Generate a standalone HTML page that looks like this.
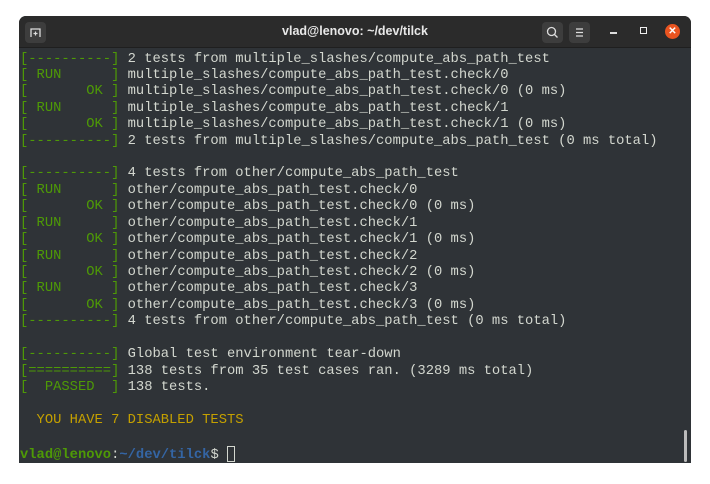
<!DOCTYPE html>
<html><head><style>
html,body{margin:0;width:710px;height:484px;background:#fff;overflow:hidden}
.win{position:absolute;left:19px;top:16px;width:672px;height:447px;background:#2f3337;border-radius:7px 7px 0 0;overflow:hidden}
.tb{position:absolute;left:0;top:0;width:672px;height:31px;background:#2b2b2b;border-bottom:1px solid #1f1f1f}
.title{position:absolute;left:0;width:100%;top:8px;text-align:center;color:#e8e8e8;font:bold 12.5px "Liberation Sans",sans-serif}
.btn{position:absolute;top:6px;width:21px;height:21px;background:#3d3d3d;border-radius:4px}
.term{position:absolute;left:1px;top:35.5px;font:13.8px/16.42px "Liberation Mono",monospace;color:#d3d7cf;white-space:pre}
.g{color:#4e9a06}.y{color:#c4a000}.b{color:#3465a4}
.gb{color:#4e9a06;font-weight:bold}.bb{color:#3465a4;font-weight:bold}
</style></head><body>
<div class="win">
<div class="tb">
<div class="btn" style="left:6px"><svg width="21" height="21"><path d="M6 15V7h9v8" fill="none" stroke="#ddd" stroke-width="1.3"/><path d="M8.5 11.5h4M10.5 9.5v4" stroke="#ddd" stroke-width="1.2"/></svg></div>
<div class="title">vlad@lenovo: ~/dev/tilck</div>
<div class="btn" style="left:523px"><svg width="21" height="21"><circle cx="9.5" cy="9.5" r="4" fill="none" stroke="#ddd" stroke-width="1.3"/><path d="M12.5 12.5l3 3" stroke="#ddd" stroke-width="1.3"/></svg></div>
<div class="btn" style="left:550px"><svg width="21" height="21"><path d="M7 7h7M7 10.5h7M7 14h7" stroke="#ddd" stroke-width="1.3"/></svg></div>
<div style="position:absolute;left:591px;top:16px;width:7px;height:2px;background:#ddd"></div>
<div style="position:absolute;left:621px;top:11px;width:5px;height:5px;border:1.5px solid #eee"></div>
<div style="position:absolute;left:646px;top:8px;width:15px;height:15px;border-radius:50%;background:#e95420;color:#fff;font:bold 10px/15px 'Liberation Sans',sans-serif;text-align:center">✕</div>
</div>
<div class="term"><span class="g">[----------]</span> 2 tests from multiple_slashes/compute_abs_path_test
<span class="g">[ RUN      ]</span> multiple_slashes/compute_abs_path_test.check/0
<span class="g">[       OK ]</span> multiple_slashes/compute_abs_path_test.check/0 (0 ms)
<span class="g">[ RUN      ]</span> multiple_slashes/compute_abs_path_test.check/1
<span class="g">[       OK ]</span> multiple_slashes/compute_abs_path_test.check/1 (0 ms)
<span class="g">[----------]</span> 2 tests from multiple_slashes/compute_abs_path_test (0 ms total)

<span class="g">[----------]</span> 4 tests from other/compute_abs_path_test
<span class="g">[ RUN      ]</span> other/compute_abs_path_test.check/0
<span class="g">[       OK ]</span> other/compute_abs_path_test.check/0 (0 ms)
<span class="g">[ RUN      ]</span> other/compute_abs_path_test.check/1
<span class="g">[       OK ]</span> other/compute_abs_path_test.check/1 (0 ms)
<span class="g">[ RUN      ]</span> other/compute_abs_path_test.check/2
<span class="g">[       OK ]</span> other/compute_abs_path_test.check/2 (0 ms)
<span class="g">[ RUN      ]</span> other/compute_abs_path_test.check/3
<span class="g">[       OK ]</span> other/compute_abs_path_test.check/3 (0 ms)
<span class="g">[----------]</span> 4 tests from other/compute_abs_path_test (0 ms total)

<span class="g">[----------]</span> Global test environment tear-down
<span class="g">[==========]</span> 138 tests from 35 test cases ran. (3289 ms total)
<span class="g">[  PASSED  ]</span> 138 tests.

<span class="y">  YOU HAVE 7 DISABLED TESTS</span>

<span class="gb">vlad@lenovo</span>:<span class="bb">~/dev/tilck</span>$ <span style="display:inline-block;width:8px;height:16px;border:1px solid #d3d7cf;box-sizing:border-box;vertical-align:-4px"></span></div>
<div style="position:absolute;left:665px;top:414px;width:3px;height:32px;background:#bbb;border-radius:2px"></div>
</div>
</body></html>
